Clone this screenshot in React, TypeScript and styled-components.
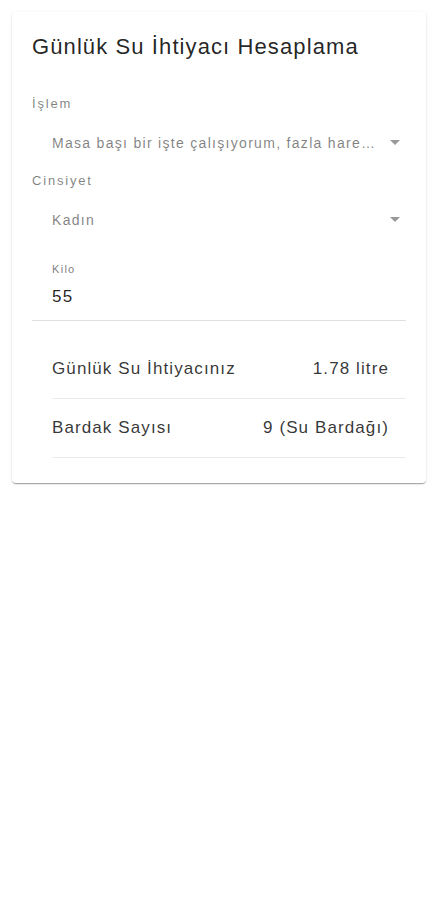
import React, { useState } from "react"
import styled, { createGlobalStyle } from "styled-components"

const GlobalStyle = createGlobalStyle`
    body {
        margin: 0;
        background: #ffffff;
        font-family: "Liberation Sans", Arial, sans-serif;
    }
`

const Card = styled.div`
    margin: 12px;
    padding: 21px 20px 25px 20px;
    background: #ffffff;
    border-radius: 4px;
    box-shadow: rgba(0, 0, 0, 0.2) 0px 2px 1px -1px, rgba(0, 0, 0, 0.14) 0px 1px 1px 0px, rgba(0, 0, 0, 0.12) 0px 1px 3px 0px;
`

const Title = styled.h2`
    margin: 0 0 33px 0;
    font-size: 22px;
    line-height: 28px;
    font-weight: 400;
    letter-spacing: 1.1px;
    color: rgba(0, 0, 0, 0.87);
`

const Field = styled.div<{ gap?: number }>`
    display: flex;
    flex-direction: column;
    margin-bottom: ${({ gap }) => gap ?? 18}px;
`

const Label = styled.label`
    font-size: 13px;
    line-height: 20px;
    letter-spacing: 1.8px;
    color: rgba(0, 0, 0, 0.5);
`

const SelectBox = styled.div`
    display: flex;
    align-items: center;
    padding: 19px 0 0 20px;
    height: 20px;
`

const SelectValue = styled.span`
    flex: 1;
    min-width: 0;
    font-size: 14px;
    line-height: 20px;
    letter-spacing: 1.3px;
    color: rgba(0, 0, 0, 0.5);
    white-space: nowrap;
    overflow: hidden;
    text-overflow: ellipsis;
`

const Caret = styled.span`
    width: 0;
    height: 0;
    margin: 0 6px 2px 10px;
    border-left: 5px solid transparent;
    border-right: 5px solid transparent;
    border-top: 5px solid rgba(0, 0, 0, 0.4);
`

const TextField = styled.div`
    display: flex;
    flex-direction: column;
    padding: 0 0 11px 20px;
    border-bottom: 1px solid rgba(0, 0, 0, 0.12);
`

const SmallLabel = styled.label`
    font-size: 11px;
    line-height: 16px;
    letter-spacing: 1.3px;
    color: rgba(0, 0, 0, 0.55);
    margin-bottom: 8px;
`

const Input = styled.input`
    border: none;
    outline: none;
    padding: 0;
    font-family: inherit;
    font-size: 17px;
    line-height: 24px;
    height: 24px;
    letter-spacing: 1.2px;
    color: rgba(0, 0, 0, 0.87);
    background: transparent;
`

const List = styled.ul`
    list-style: none;
    margin: 0;
    padding: 19px 0 0 20px;
`

const ListRow = styled.li`
    display: flex;
    justify-content: space-between;
    align-items: center;
    height: 58px;
    padding-right: 17px;
    border-bottom: 1px solid rgba(0, 0, 0, 0.08);
    font-size: 17px;
    letter-spacing: 1.1px;
    color: rgba(0, 0, 0, 0.8);
`

const rows = [
    { name: "Günlük Su İhtiyacınız", value: "1.78 litre" },
    { name: "Bardak Sayısı", value: "9 (Su Bardağı)" }
]

const App: React.FC = () => {
    const [kilo, setKilo] = useState<string>("55")

    return (
        <>
            <GlobalStyle />
            <Card>
                <Title>Günlük Su İhtiyacı Hesaplama</Title>
                <Field>
                    <Label>İşlem</Label>
                    <SelectBox>
                        <SelectValue>Masa başı bir işte çalışıyorum, fazla hareket etmiyorum</SelectValue>
                        <Caret />
                    </SelectBox>
                </Field>
                <Field gap={31}>
                    <Label>Cinsiyet</Label>
                    <SelectBox>
                        <SelectValue>Kadın</SelectValue>
                        <Caret />
                    </SelectBox>
                </Field>
                <TextField>
                    <SmallLabel>Kilo</SmallLabel>
                    <Input value={kilo} onChange={e => setKilo(e.target.value)} />
                </TextField>
                <List>
                    {
                        rows.map(row =>
                            <ListRow key={row.name}>
                                <span>{row.name}</span>
                                <span>{row.value}</span>
                            </ListRow>
                        )
                    }
                </List>
            </Card>
        </>
    )
}

export default App
